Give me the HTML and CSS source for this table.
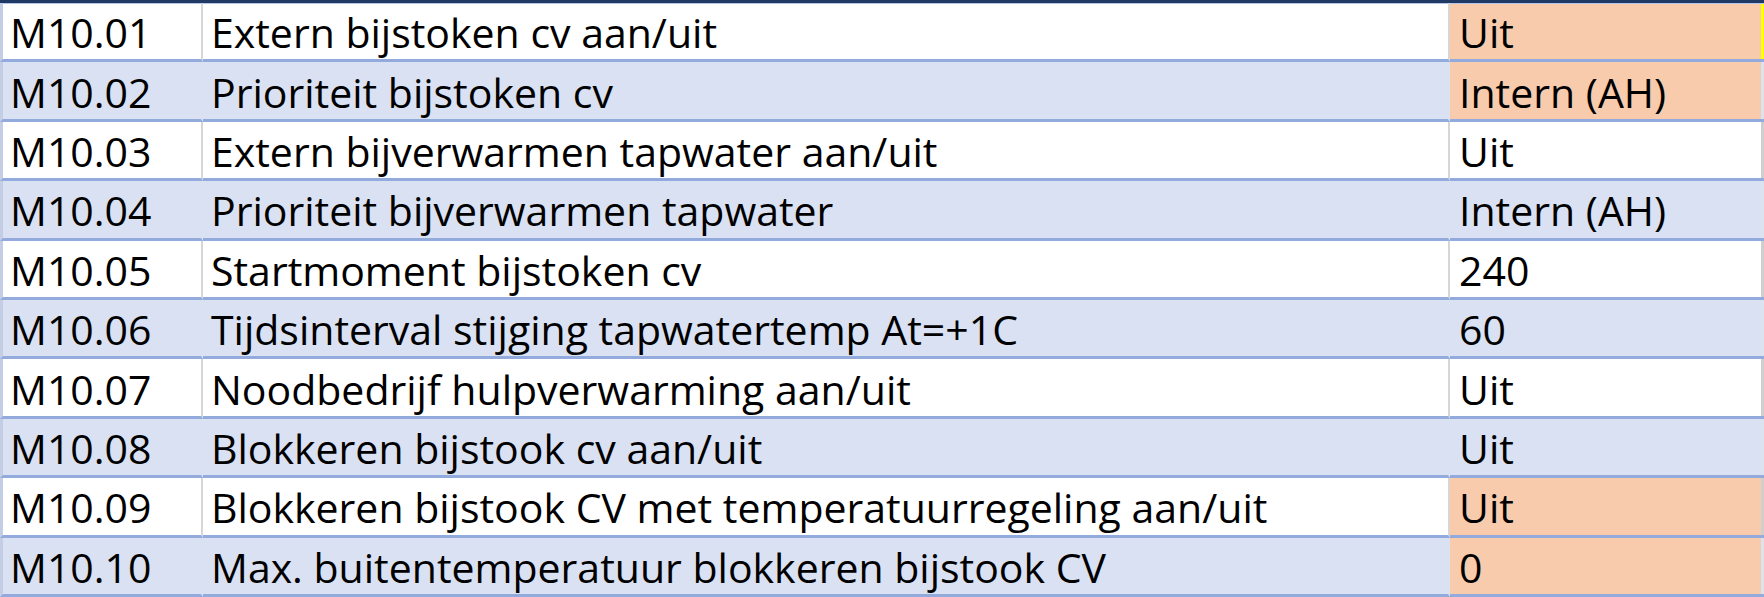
FILE: index.html
```html
<!DOCTYPE html>
<html lang="nl">
<head>
<meta charset="utf-8">
<title>M10 instellingen</title>
<link rel="stylesheet" href="styles.css">
</head>
<body>
<table class="sheet">
  <colgroup>
    <col class="c-code"><col class="c-desc"><col class="c-val"><col class="c-edge">
  </colgroup>
  <tbody>
    <tr class="row light">
      <td class="code">M10.01</td><td class="desc">Extern bijstoken cv aan/uit</td><td class="val hl">Uit</td><td class="edge sel"></td>
    </tr>
    <tr class="row band">
      <td class="code">M10.02</td><td class="desc">Prioriteit bijstoken cv</td><td class="val hl">Intern (AH)</td><td class="edge"></td>
    </tr>
    <tr class="row light">
      <td class="code">M10.03</td><td class="desc">Extern bijverwarmen tapwater aan/uit</td><td class="val">Uit</td><td class="edge"></td>
    </tr>
    <tr class="row band">
      <td class="code">M10.04</td><td class="desc">Prioriteit bijverwarmen tapwater</td><td class="val">Intern (AH)</td><td class="edge"></td>
    </tr>
    <tr class="row light">
      <td class="code">M10.05</td><td class="desc">Startmoment bijstoken cv</td><td class="val">240</td><td class="edge"></td>
    </tr>
    <tr class="row band">
      <td class="code">M10.06</td><td class="desc">Tijdsinterval stijging tapwatertemp At=+1C</td><td class="val">60</td><td class="edge"></td>
    </tr>
    <tr class="row light">
      <td class="code">M10.07</td><td class="desc">Noodbedrijf hulpverwarming aan/uit</td><td class="val">Uit</td><td class="edge"></td>
    </tr>
    <tr class="row band">
      <td class="code">M10.08</td><td class="desc">Blokkeren bijstook cv aan/uit</td><td class="val">Uit</td><td class="edge"></td>
    </tr>
    <tr class="row light">
      <td class="code">M10.09</td><td class="desc">Blokkeren bijstook CV met temperatuurregeling aan/uit</td><td class="val hl">Uit</td><td class="edge"></td>
    </tr>
    <tr class="row band">
      <td class="code">M10.10</td><td class="desc">Max. buitentemperatuur blokkeren bijstook CV</td><td class="val hl">0</td><td class="edge"></td>
    </tr>
  </tbody>
</table>
</body>
</html>
```
FILE: styles.css
```css
html, body {
  margin: 0;
  padding: 0;
  background: #ffffff;
}

.sheet {
  border-collapse: separate;
  border-spacing: 0;
  table-layout: fixed;
  width: 1764px;
  border-top: 3px solid #203864;
  font-family: "Open Sans", "Noto Sans", sans-serif;
  font-size: 41px;
  color: #000000;
}

.c-code { width: 203px; }
.c-desc { width: 1247px; }
.c-val { width: 311px; }
.c-edge { width: 3px; }

.row td {
  height: 59.4px;
  box-sizing: border-box;
  padding: 0 0 2px 0;
  border-bottom: 3px solid #92ABDC;
  vertical-align: bottom;
  white-space: nowrap;
  line-height: 1.2;
}

.row:first-child td {
  box-shadow: inset 0 1px 0 #B4C6E7;
}

.light td { background: #ffffff; }
.band td { background: #D9E1F2; }

.code {
  padding-left: 7px !important;
  border-left: 3px solid #C3CEE4;
}

.light .code,
.light .desc {
  border-right: 2px solid #D6D6D6;
}

.band .code,
.band .desc {
  border-right: 2px solid #D9E1F2;
}

.desc {
  padding-left: 8px !important;
}

.val {
  padding-left: 9px !important;
}

.row td.hl {
  background: #F8CBAD;
}

.row td.edge {
  background: #DCE3F0;
}

.row.light td.edge {
  background: #CFCFCF;
}

.row td.edge.sel {
  background: #FFFF00;
}
```
